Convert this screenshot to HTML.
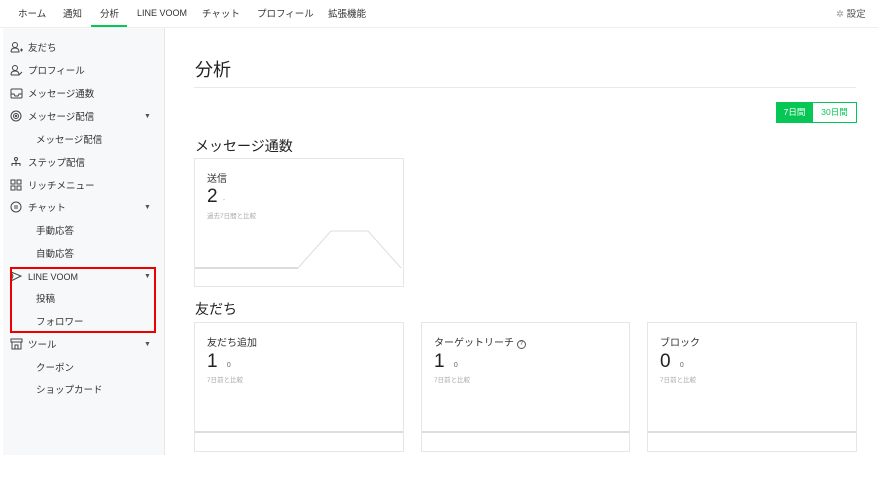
<!DOCTYPE html>
<html><head><meta charset="utf-8"><style>
*{margin:0;padding:0;box-sizing:border-box}
body{width:878px;height:478px;background:#fff;font-family:"Liberation Sans","Noto Sans CJK JP",sans-serif;color:#333;position:relative;overflow:hidden}
.a{position:absolute;white-space:nowrap}
.nav{font-size:9.5px;color:#333;top:8px;height:14px;line-height:14px}
.side{left:3px;top:28px;width:162px;height:427px;background:#f7f8f9;border-right:1px solid #e6e6e6}
.si{font-size:9.5px;color:#333;line-height:13px;margin-top:1px}
.card{border:1px solid #e6e6e6;background:#fff}
.ct{font-size:10px;color:#333}
.num{font-size:19px;color:#222}
.sm{font-size:6.5px;color:#aaa}
.car{font-size:7px;color:#555}
</style></head><body>
<div class="a nav" style="left:18px">ホーム</div>
<div class="a nav" style="left:63px">通知</div>
<div class="a nav" style="left:100px">分析</div>
<div class="a nav" style="left:137px;font-size:9px;top:6px">LINE VOOM</div>
<div class="a nav" style="left:202px">チャット</div>
<div class="a nav" style="left:257px">プロフィール</div>
<div class="a nav" style="left:328px">拡張機能</div>
<div class="a" style="left:91px;top:25px;width:36px;height:2px;background:#06c755"></div>
<div class="a nav" style="left:836px;color:#555"><span style="color:#999">✲</span> 設定</div>
<div class="a" style="left:0;top:27px;width:878px;height:1px;background:#eee"></div>
<div class="a side"></div>
<svg class="a" style="left:10px;top:41px" width="14" height="360" fill="none" stroke="#444" stroke-width="1">
<circle cx="5" cy="4" r="2.5"/><path d="M1 11c0-3 2-4 4-4s4 1 4 4h-8M10 9h3M11.5 7.5v3"/>
<g transform="translate(0,23)"><circle cx="5" cy="4" r="2.5"/><path d="M1 11c0-3 2-4 4-4s4 1 4 4h-8M9 11l3-3"/></g>
<g transform="translate(0,46)"><rect x="1" y="2" width="11" height="9" rx="1"/><path d="M1 7h3l1 2h3l1-2h3"/></g>
<g transform="translate(0,69)"><circle cx="6" cy="6" r="5"/><circle cx="6" cy="6" r="2.5"/><circle cx="6" cy="6" r=".7"/></g>
<g transform="translate(0,115)"><circle cx="6" cy="3" r="1.5"/><path d="M6 4.5v3M2 10V7.5h8V10M6 7.5V10"/></g>
<g transform="translate(0,138)"><rect x="1" y="1" width="4" height="4"/><rect x="7" y="1" width="4" height="4"/><rect x="1" y="7" width="4" height="4"/><rect x="7" y="7" width="4" height="4"/></g>
<g transform="translate(0,160)"><circle cx="6" cy="6" r="5"/><path d="M4 5h4M4 7h4"/></g>
<g transform="translate(0,229)"><path d="M1 2l10 4l-10 5l2-5z"/></g>
<g transform="translate(0,297)"><path d="M1 1h11v3H1zM2 4v7h9V4M5 11V7h3v4"/></g>
</svg>
<div class="a si" style="left:28px;top:41px">友だち</div>
<div class="a si" style="left:28px;top:64px">プロフィール</div>
<div class="a si" style="left:28px;top:87px">メッセージ通数</div>
<div class="a si" style="left:28px;top:110px">メッセージ配信</div>
<div class="a si" style="left:36px;top:133px">メッセージ配信</div>
<div class="a si" style="left:28px;top:156px">ステップ配信</div>
<div class="a si" style="left:28px;top:179px">リッチメニュー</div>
<div class="a si" style="left:28px;top:201px">チャット</div>
<div class="a si" style="left:36px;top:224px">手動応答</div>
<div class="a si" style="left:36px;top:247px">自動応答</div>
<div class="a si" style="left:28px;top:270px;font-size:9px">LINE VOOM</div>
<div class="a si" style="left:36px;top:292px">投稿</div>
<div class="a si" style="left:36px;top:315px">フォロワー</div>
<div class="a si" style="left:28px;top:338px">ツール</div>
<div class="a si" style="left:36px;top:361px">クーポン</div>
<div class="a si" style="left:36px;top:383px">ショップカード</div>
<div class="a car" style="left:144px;top:113px">▼</div>
<div class="a car" style="left:144px;top:204px">▼</div>
<div class="a car" style="left:144px;top:273px">▼</div>
<div class="a car" style="left:144px;top:341px">▼</div>
<div class="a" style="left:10px;top:267px;width:146px;height:66px;border:2px solid #e00"></div>

<div class="a" style="left:195px;top:56px;font-size:18px;color:#222">分析</div>
<div class="a" style="left:194px;top:87px;width:662px;height:1px;background:#e8e8e8"></div>
<div class="a" style="left:776px;top:102px;width:81px;height:21px;border:1px solid #06c755"></div>
<div class="a" style="left:776px;top:102px;width:37px;height:21px;background:#06c755;color:#fff;font-size:8.5px;text-align:center;line-height:21px">7日間</div>
<div class="a" style="left:813px;top:102px;width:43px;height:21px;color:#06c755;font-size:8.5px;text-align:center;line-height:21px">30日間</div>

<div class="a" style="left:195px;top:136px;font-size:14px;color:#222">メッセージ通数</div>
<div class="a card" style="left:194px;top:158px;width:210px;height:129px"></div>
<div class="a ct" style="left:207px;top:170px">送信</div>
<div class="a num" style="left:207px;top:186px">2 <span style="font-size:7px;color:#aaa">-</span></div>
<div class="a sm" style="left:207px;top:210px">過去7日間と比較</div>
<svg class="a" style="left:194px;top:228px" width="210" height="45"><path d="M1 40H104L137 3H174L207 40" fill="none" stroke="#ddd"/><path d="M1 40H104" stroke="#ddd" stroke-width="2"/></svg>

<div class="a" style="left:195px;top:299px;font-size:14px;color:#222">友だち</div>
<div class="a card" style="left:194px;top:322px;width:210px;height:130px"></div>
<div class="a card" style="left:421px;top:322px;width:209px;height:130px"></div>
<div class="a card" style="left:647px;top:322px;width:210px;height:130px"></div>
<div class="a ct" style="left:207px;top:334px">友だち追加</div>
<div class="a ct" style="left:434px;top:334px">ターゲットリーチ <span style="display:inline-block;width:9px;height:9px;border:1px solid #555;border-radius:50%;font-size:6px;text-align:center;line-height:7px;vertical-align:1px">?</span></div>
<div class="a ct" style="left:660px;top:334px">ブロック</div>
<div class="a num" style="left:207px;top:351px">1 <span style="font-size:7px;color:#666;margin-left:4px">0</span></div>
<div class="a num" style="left:434px;top:351px">1 <span style="font-size:7px;color:#666;margin-left:4px">0</span></div>
<div class="a num" style="left:660px;top:351px">0 <span style="font-size:7px;color:#666;margin-left:4px">0</span></div>
<div class="a sm" style="left:207px;top:374px">7日前と比較</div>
<div class="a sm" style="left:434px;top:374px">7日前と比較</div>
<div class="a sm" style="left:660px;top:374px">7日前と比較</div>
<div class="a" style="left:195px;top:431px;width:208px;height:2px;background:#ddd"></div>
<div class="a" style="left:422px;top:431px;width:207px;height:2px;background:#ddd"></div>
<div class="a" style="left:648px;top:431px;width:208px;height:2px;background:#ddd"></div>
</body></html>
